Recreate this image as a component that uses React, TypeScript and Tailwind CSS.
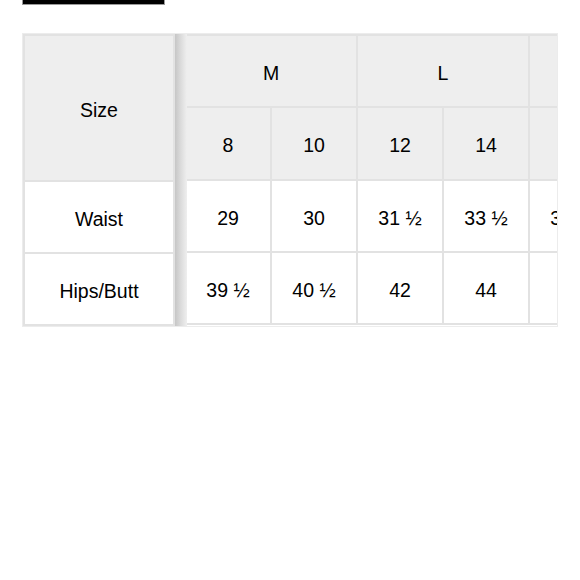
const groups = [
  { label: 'M', span: 2 },
  { label: 'L', span: 2 },
  { label: 'XL', span: 2 },
];

const sizes = ['8', '10', '12', '14', '16', '18'];

const rows = [
  { label: 'Waist', values: ['29', '30', '31 ½', '33 ½', '35 ½', '37 ½'] },
  { label: 'Hips/Butt', values: ['39 ½', '40 ½', '42', '44', '46', '48'] },
];

const cell = 'border-2 border-[#e2e2e2] text-center align-middle px-0 pb-0 pt-[5px]';

export default function App() {
  return (
    <div className="w-[580px] h-[580px] bg-white text-[19.5px] text-black font-['Liberation_Sans',Arial,sans-serif]">
      <div className="ml-[22px] w-[143px] h-[5px] bg-black border border-t-0 border-[#9a9a9a]" />

      <div className="ml-[22px] mt-[28px] w-[536px] flex border border-[#ececec] overflow-hidden">
        {/* fixed first column */}
        <table className="border-collapse shrink-0">
          <tbody>
            <tr>
              <td className={`${cell} w-[150px] h-[146px] bg-[#eeeeee]`}>Size</td>
            </tr>
            {rows.map((r) => (
              <tr key={r.label}>
                <td className={`${cell} w-[150px] h-[72px] bg-white`}>{r.label}</td>
              </tr>
            ))}
          </tbody>
        </table>

        {/* scroll shadow */}
        <div className="w-[12px] shrink-0 bg-gradient-to-r from-[#c6c6c6] via-[#dcdcdc] to-[#efefef]" />

        {/* scrolling columns */}
        <div className="flex-1 overflow-hidden">
          <table className="border-collapse table-fixed w-[518px] -ml-[3px]">
            <tbody>
              <tr>
                {groups.map((g) => (
                  <td key={g.label} colSpan={g.span} className={`${cell} h-[72px] bg-[#eeeeee]`}>
                    {g.label}
                  </td>
                ))}
              </tr>
              <tr>
                {sizes.map((s) => (
                  <td key={s} className={`${cell} w-[86px] h-[73px] bg-[#eeeeee]`}>
                    {s}
                  </td>
                ))}
              </tr>
              {rows.map((r) => (
                <tr key={r.label}>
                  {r.values.map((v, i) => (
                    <td key={i} className={`${cell} h-[72px] bg-white`}>
                      {v}
                    </td>
                  ))}
                </tr>
              ))}
            </tbody>
          </table>
        </div>
      </div>
    </div>
  );
}
